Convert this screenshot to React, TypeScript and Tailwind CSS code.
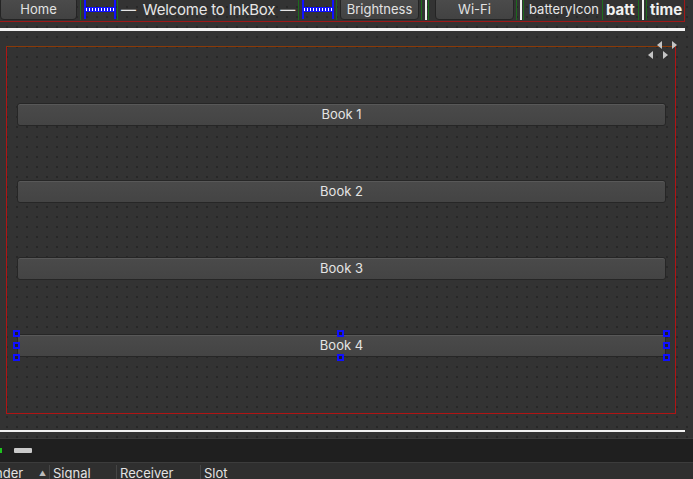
import React from "react";

const font = "font-['Inter','Liberation_Sans',sans-serif]";

const Green = ({ className = "" }: { className?: string }) => (
  <div className={`h-[20px] w-px shrink-0 bg-[#1d6b1d] ${className}`} />
);

const White = ({ className = "" }: { className?: string }) => (
  <div className={`h-[20px] w-[2px] shrink-0 bg-[#f0f0f0] ${className}`} />
);

// horizontal spacer drawn the way Designer shows it
const Spacer = ({ className = "" }: { className?: string }) => (
  <div className={`flex h-[19px] w-[32px] shrink-0 items-center border-x-2 border-[#1010ff] ${className}`}>
    <div className="h-[5px] w-full border-y border-[#1010ff] bg-[repeating-linear-gradient(90deg,#ffffff_0_1px,#1010ff_1px_3px)]" />
  </div>
);

const ToolButton = ({ label, className = "" }: { label: string; className?: string }) => (
  <div
    className={`-mt-[3px] flex h-[23px] shrink-0 items-center justify-center rounded-[4px] border border-[#242424] bg-[linear-gradient(#4c4c4c,#424242)] pt-[2px] text-[13px] text-[#e2e2e2] shadow-[inset_0_1px_0_#5a5a5a] ${className}`}
  >
    {label}
  </div>
);

const Handle = ({ className = "" }: { className?: string }) => (
  <div className={`absolute h-[7px] w-[7px] border-2 border-[#1010ff] bg-[#222] ${className}`} />
);

const BookButton = ({ label, selected = false }: { label: string; selected?: boolean }) => (
  <div className="relative">
    <div className="flex h-[23px] items-center justify-center rounded-[3px] border border-[#262626] bg-[linear-gradient(#4a4a4a,#444444)] text-[13px] text-[#e4e4e4] shadow-[inset_0_1px_0_#585858]">
      {label}
    </div>
    {selected && (
      <>
        <Handle className="-left-[4px] -top-[4px]" />
        <Handle className="-left-[4px] top-[8px]" />
        <Handle className="-left-[4px] -bottom-[4px]" />
        <Handle className="left-[320px] -top-[4px]" />
        <Handle className="left-[320px] -bottom-[4px]" />
        <Handle className="-right-[4px] -top-[4px]" />
        <Handle className="-right-[4px] top-[8px]" />
        <Handle className="-right-[4px] -bottom-[4px]" />
      </>
    )}
  </div>
);

const Arrow = ({ dir, className = "" }: { dir: "l" | "r"; className?: string }) => (
  <svg width="5" height="8" viewBox="0 0 5 8" className={`absolute ${className}`}>
    {dir === "l" ? <path d="M5 0 L0 4 L5 8 Z" fill="#c4c4c4" /> : <path d="M0 0 L5 4 L0 8 Z" fill="#c4c4c4" />}
  </svg>
);

export default function App() {
  return (
    <div className={`h-[479px] w-[693px] overflow-hidden bg-[#333333] ${font}`}>
      <div className="flex h-[438px] flex-col bg-[radial-gradient(circle,#1e1e1e_0.55px,transparent_0.9px)] bg-[length:10px_10px] bg-[position:2px_2px]">
        {/* top layout */}
        <div className="flex h-[22px] w-[685px] items-start border-b border-r border-[#a01818]">
          <ToolButton label="Home" className="w-[77px]" />
          <Green className="ml-[3px]" />
          <Spacer className="ml-[3px]" />
          <Green className="ml-[1px]" />
          <div className="flex h-[20px] w-[180px] shrink-0 items-center whitespace-nowrap text-[15px] tracking-[-0.2px] text-[#e6e6e6]">
            <span className="ml-[3px]">—</span>
            <span className="ml-[7px]">Welcome to InkBox</span>
            <span className="ml-[5px]">—</span>
          </div>
          <Green />
          <Spacer className="ml-[3px]" />
          <Green className="ml-[2px]" />
          <ToolButton label="Brightness" className="ml-[3px] w-[79px]" />
          <Green className="ml-[2px]" />
          <White className="ml-[3px]" />
          <Green className="ml-[1px]" />
          <ToolButton label="Wi-Fi" className="ml-[6px] w-[79px]" />
          <Green className="ml-[2px]" />
          <White className="ml-[3px]" />
          <Green className="ml-[1px]" />
          <div className="ml-[5px] flex h-[20px] w-[73px] shrink-0 items-center text-[13px] text-[#e6e6e6]">batteryIcon</div>
          <Green />
          <div className="ml-[3px] flex h-[20px] w-[32px] shrink-0 items-center text-[15px] font-bold text-[#f0f0f0]">batt</div>
          <Green />
          <White className="ml-[3px]" />
          <Green className="ml-[2px]" />
          <div className="ml-[3px] flex h-[20px] shrink-0 items-center text-[15px] font-bold text-[#f0f0f0]">time</div>
        </div>

        <div className="mt-[6px] h-[3px] w-[685px] bg-[#f2f2f2]" />

        {/* main frame */}
        <div className="relative ml-[6px] mt-[15px] h-[368px] w-[670px] shrink-0 shadow-[inset_0_1px_0_#8a3a08,inset_0_0_0_1px_#b01414]">
          <Arrow dir="l" className="-top-[5px] left-[651px]" />
          <Arrow dir="r" className="-top-[5px] left-[666px]" />
          <Arrow dir="l" className="left-[642px] top-[5px]" />
          <Arrow dir="r" className="left-[657px] top-[5px]" />
          <div className="flex flex-col gap-[54px] pl-[11px] pr-[10px] pt-[57px]">
            <BookButton label="Book 1" />
            <BookButton label="Book 2" />
            <BookButton label="Book 3" />
            <BookButton label="Book 4" selected />
          </div>
        </div>

        <div className="mt-[16px] h-[2px] w-[685px] bg-[#f2f2f2]" />
      </div>

      {/* bottom dock */}
      <div className="flex h-[25px] items-center border-y border-[#3c3c3c] bg-[#1f1f1f]">
        <div className="h-[5px] w-[2px] bg-[#1ec21e]" />
        <div className="ml-[12px] h-[5px] w-[18px] rounded-[1px] bg-[#cacaca]" />
      </div>
      <div className="flex h-[16px] bg-[#2f2f2f] pt-[2px] text-[13px] leading-[16px] text-[#e2e2e2]">
        <div className="flex w-[50px] items-start justify-between border-r border-[#454545] pr-[3px]">
          <span className="-ml-[5px]">nder</span>
          <span className="pt-[1px] text-[7px] text-[#bbbbbb]">▲</span>
        </div>
        <div className="w-[67px] border-r border-[#454545] pl-[3px]">Signal</div>
        <div className="w-[84px] border-r border-[#454545] pl-[3px]">Receiver</div>
        <div className="pl-[3px]">Slot</div>
      </div>
    </div>
  );
}
